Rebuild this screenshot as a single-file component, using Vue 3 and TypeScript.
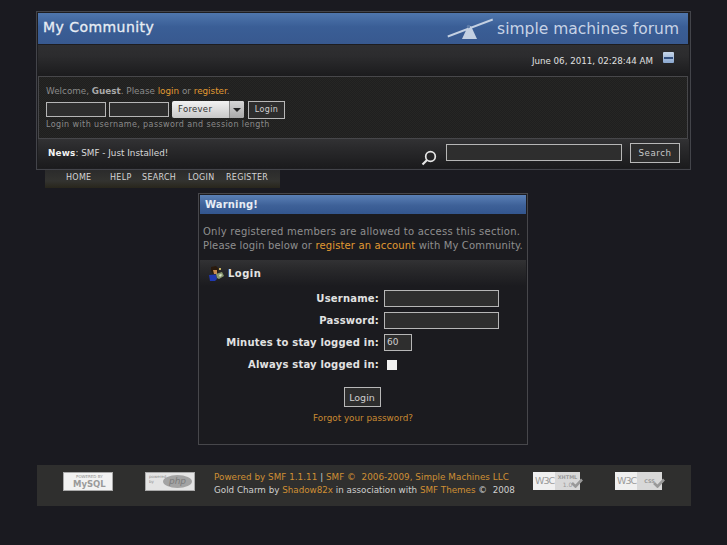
<script setup lang="ts">
const menu: { label: string; width: number }[] = [
  { label: 'HOME', width: 44 },
  { label: 'HELP', width: 32 },
  { label: 'SEARCH', width: 46 },
  { label: 'LOGIN', width: 38 },
  { label: 'REGISTER', width: 54 },
]
</script>

<template>
  <div class="page">
    <div class="wrap">
      <div class="top">
        <span class="title">My Community</span>
        <div class="brand">
          <svg class="logo" width="46" height="24" viewBox="0 0 46 24">
            <path d="M0.5 19.5 L45.5 2.5 L46 4.5 L1 21.5 Z" fill="#c3d0e2" />
            <path d="M21 10 L15 23 L30 23 L24 10 Z" fill="#c3d0e2" />
            <circle cx="21.5" cy="10.5" r="1.8" fill="#5c7ba8" />
          </svg>
          <span class="smf">simple machines forum</span>
        </div>
      </div>
      <div class="datebar">
        <span class="date">June 06, 2011, 02:28:44 AM</span>
        <span class="collapse"><i></i></span>
      </div>
      <div class="userbox">
        <div class="welcome">Welcome, <b>Guest</b>. Please <a>login</a> or <a>register</a>.</div>
        <div class="quick">
          <span class="field short"></span>
          <span class="field short"></span>
          <span class="select"><span class="sel-text">Forever</span><span class="sel-btn"><i></i></span></span>
          <span class="btn small">Login</span>
        </div>
        <div class="hint">Login with username, password and session length</div>
      </div>
      <div class="newsbar">
        <div class="news"><b>News</b>: SMF - Just Installed!</div>
        <svg class="glass" width="16" height="16" viewBox="0 0 16 16">
          <circle cx="9.5" cy="6.5" r="4.8" fill="none" stroke="#e6e6e6" stroke-width="1.7" />
          <path d="M6 10 L1.5 14.5" stroke="#e6e6e6" stroke-width="2.2" />
        </svg>
        <span class="field search"></span>
        <span class="btn searchbtn">Search</span>
      </div>
    </div>
    <div class="menu">
      <span v-for="m in menu" :key="m.label" class="item" :style="{ width: m.width + 'px' }">{{ m.label }}</span>
    </div>

    <div class="warning">
      <div class="warn-head">Warning!</div>
      <div class="warn-text">
        <div class="l1">Only registered members are allowed to access this section.</div>
        <div class="l2">Please login below or <a>register an account</a> with My Community.</div>
      </div>
      <div class="login-head">
        <svg width="17" height="15" viewBox="0 0 17 15">
          <path d="M3 1 L8 0 L10 2 L10 5 L9 8 L5 8 L3 5 Z" fill="#2a1a0c" />
          <path d="M5 4 L9 4 L9 8 L6 8 Z" fill="#c68a50" />
          <path d="M1 9 L8 8.5 L9 13 L7 15 L2 15 Z" fill="#2038b0" />
          <path d="M8 8 L14 6 L16 10 L11 13 L9 12 Z" fill="#8a9a70" />
          <path d="M11 2 L13 2 L13 4 L11 4 Z" fill="#c8b060" />
          <path d="M11 9 L13 8 L14 9 L12 11 Z" fill="#dfe6d0" />
        </svg>
        <span>Login</span>
      </div>
      <div class="form">
        <div class="row r1"><label>Username:</label><span class="field wide"></span></div>
        <div class="row r2"><label>Password:</label><span class="field wide"></span></div>
        <div class="row r3"><label>Minutes to stay logged in:</label><span class="field mins">60</span></div>
        <div class="row r4"><label>Always stay logged in:</label><span class="check"></span></div>
        <div class="submit"><span class="btn big">Login</span></div>
        <a class="forgot">Forgot your password?</a>
      </div>
    </div>

    <div class="footer">
      <div class="badges left">
        <span class="badge mysql"><small>POWERED BY</small><em>MySQL</em></span>
        <span class="badge php"><small>powered<br />by</small><em>php</em></span>
      </div>
      <div class="copy">
        <div class="c1"><a>Powered by SMF 1.1.11</a> | <a>SMF ©&nbsp; 2006-2009, Simple Machines LLC</a></div>
        <div>Gold Charm by <a>Shadow82x</a> in association with <a>SMF Themes</a> ©&nbsp; 2008</div>
      </div>
      <div class="badges right">
        <span class="w3c x"><b>W3C</b><span class="w3r"><u>XHTML</u><u class="ver">1.0</u></span><svg width="12" height="10" viewBox="0 0 12 10"><path d="M1 5 L4.5 8.5 L11 1.5" fill="none" stroke="#999" stroke-width="2.6" /></svg></span>
        <span class="w3c c"><b>W3C</b><span class="w3r"><u>CSS</u></span><svg width="12" height="10" viewBox="0 0 12 10"><path d="M1 5 L4.5 8.5 L11 1.5" fill="none" stroke="#999" stroke-width="2.6" /></svg></span>
      </div>
    </div>
  </div>
</template>

<style>
html, body { margin: 0; background: #1a1a20; }
</style>

<style scoped>
.page {
  box-sizing: border-box;
  width: 727px;
  height: 545px;
  overflow: hidden;
  padding-top: 11px;
  background: #1a1a20;
  font-family: "DejaVu Sans", Verdana, sans-serif;
  font-size: 9px;
  color: #c9c9c9;
}
a { color: #e09a32; }
.wrap {
  box-sizing: border-box;
  width: 655px;
  height: 159px;
  margin-left: 36px;
  border: 1px solid #43444a;
  padding: 1px 1px 0;
  background: #1d1d20;
}
.top {
  height: 31px;
  display: flex;
  align-items: center;
  justify-content: space-between;
  margin-right: 1px;
  padding: 0 9px 0 5px;
  background: linear-gradient(#4f76ad, #3a5e96 45%, #38598f);
}
.title { font-size: 14px; color: #e8edf4; letter-spacing: 0.45px; position: relative; top: -2px; -webkit-text-stroke: 0.3px #e8edf4; }
.brand { display: flex; align-items: center; gap: 4px; }
.logo { display: block; position: relative; top: -1px; }
.smf { font-size: 15.5px; color: #c7d3e6; }
.datebar {
  height: 31px;
  display: flex;
  align-items: flex-start;
  justify-content: flex-end;
  padding-right: 15px;
  box-sizing: border-box;
  margin-top: 1px;
  background: linear-gradient(#2f2f31, #2c2c2e 35%, #1b1b1d);
}
.date { margin-top: 11px; margin-right: 10px; font-size: 8.7px; color: #e0e0e0; }
.collapse {
  margin-top: 7px;
  width: 11px;
  height: 11px;
  border-radius: 1px;
  background: linear-gradient(#c6d6ea, #8aa7cf);
  display: flex;
  align-items: center;
  justify-content: center;
}
.collapse i { display: block; width: 9px; height: 2px; background: #33507f; }
.userbox {
  box-sizing: border-box;
  height: 63px;
  margin-right: 1px;
  border: 1px solid #47474a;
  padding: 8px 0 0 7px;
  background: repeating-conic-gradient(#1f1f1f 0 25%, #262624 0 50%) 0 0 / 2px 2px;
}
.welcome { font-size: 8.8px; line-height: 12px; color: #8a8a8a; }
.welcome b { color: #a8a8a8; }
.quick { display: flex; align-items: center; gap: 3px; margin-top: 4px; height: 17px; }
.field {
  box-sizing: border-box;
  display: inline-block;
  border: 1px solid #b6b6b6;
  background: #2e2e2e;
}
.short { width: 60px; height: 15px; }
.select {
  box-sizing: border-box;
  width: 72px;
  height: 17px;
  display: flex;
  margin-right: 1px;
  border-radius: 2px;
  overflow: hidden;
  background: linear-gradient(#f2f2f2, #c8c8c8);
  color: #333;
  font-size: 8.5px;
  letter-spacing: 0.3px;
}
.sel-text { flex: 1; padding-left: 6px; line-height: 17px; }
.sel-btn {
  width: 14px;
  display: flex;
  align-items: center;
  justify-content: center;
  border-left: 1px solid #888;
  background: linear-gradient(#d6d6d6, #a8a8a8);
}
.sel-btn i { display: block; width: 0; height: 0; border: 4px solid transparent; border-top: 4px solid #222; border-bottom: 0; }
.btn {
  box-sizing: border-box;
  display: inline-flex;
  align-items: center;
  justify-content: center;
  border: 1px solid #b8b8b8;
  background: #2d2d2d;
  color: #cfcfcf;
}
.small { width: 37px; height: 18px; font-size: 8px; letter-spacing: 0.4px; }
.hint { font-size: 8px; color: #8a8a8a; letter-spacing: 0.4px; line-height: 11px; margin-top: 1px; }
.newsbar {
  height: 29px;
  display: flex;
  align-items: center;
  padding: 0 9px 0 10px;
  background: linear-gradient(#323234, #2a2a2c 30%, #1b1b1d);
}
.news { flex: 1; font-size: 8.8px; color: #d8d8d8; margin-top: -2px; }
.news b { color: #f2f2f2; letter-spacing: 0.2px; }
.glass { margin: 8px 9px 0 0; }
.search { width: 176px; height: 17px; margin: -2px 8px 0 0; }
.searchbtn { width: 50px; height: 20px; margin-top: -2px; font-size: 8.7px; letter-spacing: 0.5px; color: #c8c8c8; }
.menu {
  box-sizing: border-box;
  width: 235px;
  height: 18px;
  margin-left: 45px;
  padding-left: 21px;
  display: flex;
  background: linear-gradient(#2b2b2b, #333330 60%, #28261c);
}
.item {
  line-height: 16px;
  font-size: 8px;
  letter-spacing: 0.3px;
  color: #d4d4d4;
  white-space: nowrap;
}
.warning {
  box-sizing: border-box;
  width: 330px;
  height: 252px;
  margin: 5px 0 0 198px;
  border: 1px solid #47474b;
  padding: 1px;
  background: #1b1b1f;
}
.warn-head {
  height: 19px;
  line-height: 20px;
  padding-left: 5px;
  font-size: 10px;
  font-weight: 700;
  letter-spacing: 0.15px;
  color: #e8edf4;
  background: linear-gradient(#5a80b6, #3e6198 55%, #33568e);
}
.warn-text {
  margin: 11px 0 0 3px;
  font-size: 10px;
  line-height: 14px;
  white-space: nowrap;
  color: #8f8f8f;
}
.l1 { letter-spacing: 0.25px; }
.l2 { letter-spacing: 0.14px; }
.login-head {
  display: flex;
  align-items: center;
  gap: 3px;
  height: 26px;
  margin-top: 7px;
  padding-left: 8px;
  font-size: 10px;
  font-weight: 700;
  letter-spacing: 0.45px;
  color: #e4e4e4;
  background: linear-gradient(#323234, #2a2a2c 30%, #1b1b1f);
}
.row { display: flex; align-items: center; }
.row label {
  width: 179px;
  text-align: right;
  margin-right: 5px;
  font-size: 10px;
  font-weight: 700;
  letter-spacing: 0.2px;
  color: #e2e2e2;
  white-space: nowrap;
}
.r1 { margin-top: 4px; height: 17px; }
.r2 { margin-top: 5px; height: 17px; }
.r3 { margin-top: 5px; height: 17px; }
.r4 { margin-top: 5px; height: 17px; }
.wide { width: 115px; height: 17px; }
.mins { width: 28px; height: 17px; font-size: 9px; padding: 2px 0 0 2px; color: #cfcfcf; }
.check { width: 10px; height: 10px; margin-left: 3px; background: #f2f2f2; }
.submit { display: flex; justify-content: center; margin-top: 14px; padding-right: 2px; }
.big { width: 37px; height: 20px; font-size: 9.5px; }
.forgot { display: block; text-align: center; margin-top: 6px; font-size: 8.8px; line-height: 11px; color: #c98a32; }
.footer {
  box-sizing: border-box;
  width: 654px;
  height: 41px;
  margin: 20px 0 0 37px;
  display: flex;
  background: #2f2f2e;
}
.badges { display: flex; }
.left { width: 177px; gap: 32px; padding: 7px 0 0 26px; box-sizing: border-box; }
.right { gap: 35px; padding-top: 7px; }
.badge {
  box-sizing: border-box;
  position: relative;
  width: 50px;
  height: 19px;
  border: 1px solid #aaa;
  background: #e4e4e4;
  color: #8f8f8f;
  overflow: hidden;
}
.badge small { position: absolute; left: 3px; top: 1px; font-size: 4px; line-height: 5px; }
.mysql { background: #f2f2f2; }
.mysql small { left: 12px; top: 1px; }
.mysql em { position: absolute; left: 9px; top: 6px; line-height: 10px; font-style: normal; font-size: 8.5px; font-weight: 700; color: #9a9a9a; }
.php em {
  position: absolute;
  right: 2px;
  top: 2px;
  width: 29px;
  height: 13px;
  border-radius: 50%;
  background: #a3a3a3;
  text-align: center;
  font-style: italic;
  font-size: 9px;
  line-height: 12px;
  color: #7c7c7c;
}
.copy {
  width: 319px;
  padding-top: 6px;
  line-height: 13px;
  font-size: 8.75px;
  white-space: nowrap;
  color: #cfcfcf;
}
.c1 { letter-spacing: 0.05px; }
.copy a { color: #d08f34; }
.w3c {
  position: relative;
  box-sizing: border-box;
  display: flex;
  width: 47px;
  height: 18px;
  background: #f0f0f0;
  color: #aaa;
}
.w3c > b { width: 22px; font-size: 9.5px; line-height: 18px; letter-spacing: -1px; padding-left: 2px; box-sizing: border-box; font-weight: 400; color: #999; white-space: nowrap; overflow: hidden; }
.w3r {
  flex: 1;
  display: flex;
  flex-direction: column;
  align-items: center;
  justify-content: center;
  background: #d8d8d8;
}
.w3r u { text-decoration: none; font-size: 5px; line-height: 7px; font-weight: 700; color: #999; }
.w3r .ver { font-size: 6px; font-weight: 400; }
.w3c svg { position: absolute; right: -3px; top: 6px; }
</style>
